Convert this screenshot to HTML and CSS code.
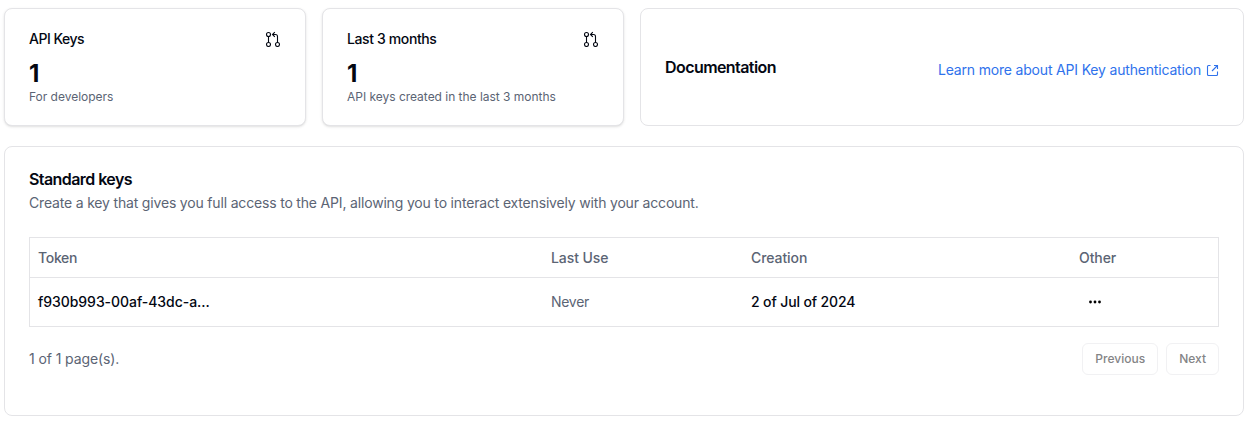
FILE: index.html
```html
<!DOCTYPE html>
<html lang="en">
<head>
<meta charset="utf-8">
<title>API Keys</title>
<link rel="stylesheet" href="styles.css">
</head>
<body>
<main class="page">
  <section class="top">
    <article class="card stat">
      <div class="stat-head"><h3 class="tight">API Keys</h3>
        <svg class="icon" viewBox="0 0 16 16"><circle cx="3.5" cy="3.5" r="2"/><circle cx="3.5" cy="13.5" r="2"/><circle cx="12.5" cy="13.5" r="2"/><path d="M3.5 5.5v6M12.5 11.5V5.5q0-2-2-2H7.5M9.8 1.2 7.5 3.5 9.8 5.8"/></svg></div>
      <div class="value">1</div>
      <p class="note">For developers</p>
    </article>
    <article class="card stat">
      <div class="stat-head"><h3>Last 3 months</h3>
        <svg class="icon" viewBox="0 0 16 16"><circle cx="3.5" cy="3.5" r="2"/><circle cx="3.5" cy="13.5" r="2"/><circle cx="12.5" cy="13.5" r="2"/><path d="M3.5 5.5v6M12.5 11.5V5.5q0-2-2-2H7.5M9.8 1.2 7.5 3.5 9.8 5.8"/></svg></div>
      <div class="value">1</div>
      <p class="note">API keys created in the last 3 months</p>
    </article>
    <article class="card docs">
      <h2>Documentation</h2>
      <a class="link" href="#"><span>Learn more about API Key authentication</span>
        <svg class="ext" viewBox="0 0 14 14"><path d="M5.5 2.5H3.5q-1 0-1 1v8q0 1 1 1h8q1 0 1-1v-3M9 2.5h3.5V6M12.5 2.5 7 8"/></svg></a>
    </article>
  </section>
  <section class="card keys">
    <h2>Standard keys</h2>
    <p class="desc">Create a key that gives you full access to the API, allowing you to interact extensively with your account.</p>
    <div class="table">
      <div class="row head"><span class="token">Token</span><span>Last Use</span><span>Creation</span><span>Other</span></div>
      <div class="row body"><span class="strong">f930b993-00af-43dc-a...</span><span class="muted">Never</span><span class="strong date">2 of Jul of 2024</span><span class="more"><svg class="dots" viewBox="0 0 16 16"><circle cx="3.5" cy="8" r="1.4"/><circle cx="8" cy="8" r="1.4"/><circle cx="12.5" cy="8" r="1.4"/></svg></span></div>
    </div>
    <div class="pager"><span class="count">1 of 1 page(s).</span>
      <div class="buttons"><button class="btn">Previous</button><button class="btn">Next</button></div></div>
  </section>
</main>
</body>
</html>
```
FILE: styles.css
```css
* { box-sizing: border-box; }
body { margin: 0; background: #fff; color: #030712; font-family: Inter, "Liberation Sans", sans-serif; }
h2, h3, p { margin: 0; }
.page { padding: 8px 5px 0 4px; }
.top { display: grid; grid-template-columns: 302px 302px 604px; gap: 16px; height: 118px; }
.card { border: 1px solid #e4e4e7; border-radius: 8px; background: #fff; }
.stat { padding: 20px 24px; box-shadow: 0 1px 3px rgba(0,0,0,.1), 0 1px 2px -1px rgba(0,0,0,.1); }
.stat-head { display: flex; justify-content: space-between; align-items: flex-start; height: 21px; margin-bottom: 8px; }
h3 { font-size: 14px; font-weight: 500; line-height: 20px; letter-spacing: -.38px; }
.tight { letter-spacing: -.5px; }
.icon { width: 16px; height: 16px; margin-top: 2px; fill: none; stroke: currentColor; stroke-width: 1.1; }
.value { font-size: 24px; font-weight: 700; line-height: 32px; }
.note { margin-top: -1px; font-size: 12px; line-height: 16px; letter-spacing: -.02px; color: #5b6474; }
.docs { display: flex; justify-content: space-between; align-items: center; padding: 0 24px; }
h2 { font-size: 16px; font-weight: 600; line-height: 16px; letter-spacing: -.57px; }
.link { display: flex; align-items: center; gap: 4px; padding-top: 6px; font-size: 14px; line-height: 20px; letter-spacing: -.18px; color: #2f72ec; text-decoration: none; }
.ext { width: 14px; height: 14px; fill: none; stroke: currentColor; stroke-width: 1.1; }
.keys { margin-top: 20px; height: 270px; padding: 24px; }
.desc { margin-top: 6px; font-size: 14px; line-height: 20px; letter-spacing: -.178px; color: #5b6474; }
.table { margin-top: 24px; border: 1px solid #e4e4e7; font-size: 14px; }
.row { display: grid; grid-template-columns: 513px 200px 328px 1fr; align-items: center; height: 48px; padding-left: 8px; }
.head { height: 40px; font-weight: 500; letter-spacing: -.08px; color: #5b6474; border-bottom: 1px solid #e4e4e7; }
.token { letter-spacing: -.3px; }
.body { padding-bottom: 1px; }
.strong { font-weight: 500; letter-spacing: -.05px; }
.date { letter-spacing: -.13px; }
.muted { color: #5b6474; letter-spacing: -.3px; }
.more { padding-left: 8px; display: flex; }
.dots { width: 16px; height: 16px; }
.pager { display: flex; justify-content: space-between; align-items: center; margin-top: 16px; font-size: 14px; color: #5b6474; }
.count { padding-bottom: 1px; letter-spacing: -.1px; }
.buttons { display: flex; gap: 8px; }
.btn { height: 32px; padding: 0 12px; font: 500 12px/16px Inter, sans-serif; color: #848486; background: #fff; border: 1px solid #f1f1f3; border-radius: 6px; }
```
